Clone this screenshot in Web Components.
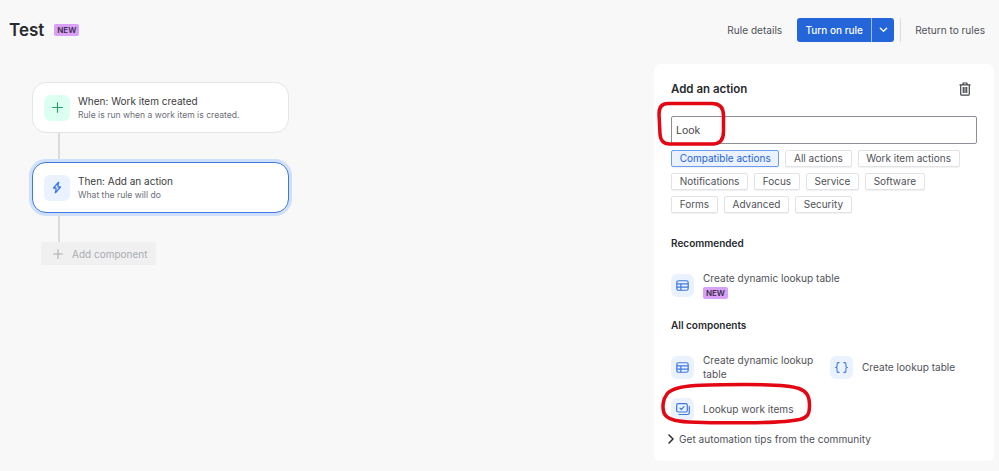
<!DOCTYPE html>
<html lang="en"><head><meta charset="utf-8"><title>Test rule</title>
<style>
html,body{margin:0;height:471px;overflow:hidden;background:#f8f8f8;font-family:Inter,"Noto Sans",sans-serif;color:#292a2e}
</style></head><body>
<rule-app></rule-app>
<script>
const ICON={
plus:s=>`<svg width="${s}" height="${s}" viewBox="0 0 16 16" fill="none" stroke="currentColor" stroke-width="1.4"><path d="M8 1.5v13M1.500 8h13"/></svg>`,
bolt:'<svg width="14" height="15" viewBox="0 0 16 16" fill="none" stroke="currentColor" stroke-width="1.5" stroke-linejoin="round"><path d="M10 1.500 4 8.600h3.200M6 14.500l6-7.100H8.800M10 1.500 8.800 7.400M6 14.500l1.200-5.900"/></svg>',
table:'<svg width="13" height="11" viewBox="0 0 14 12" fill="none" stroke="currentColor" stroke-width="1.300"><rect x=".8" y=".8" width="12.400" height="10.400" rx="2"/><path d="M.8 4.300h12.400M.8 7.700h12.400M5.200 4.300v6.900"/></svg>',
braces:'<svg width="13" height="13" viewBox="0 0 16 14" fill="none" stroke="currentColor" stroke-width="1.300" stroke-linecap="round"><path d="M5 1H3.800C3 1 2.600 1.500 2.600 2.200V5.300C2.600 6 2.200 6.700 1.300 7 2.200 7.300 2.600 8 2.600 8.700v3.100c0 .7.400 1.200 1.200 1.200H5M11 1h1.200c.8 0 1.200.5 1.200 1.200v3.100c0 .7.400 1.400 1.300 1.700-.9.300-1.300 1-1.300 1.700v3.100c0 .7-.4 1.200-1.200 1.200H11"/></svg>',
items:'<svg width="14" height="13" viewBox="0 0 14 13" fill="none" stroke="currentColor" stroke-width="1.200" stroke-linecap="round" stroke-linejoin="round"><rect x=".7" y=".7" width="10.600" height="8.300" rx="1.500"/><path d="M4 5.200 5.300 6.500 8 3.600M13.300 3.500v6.300c0 1-.7 1.700-1.700 1.700H3"/></svg>',
chev:'<svg width="9" height="6" viewBox="0 0 10 6" fill="none" stroke="currentColor" stroke-width="1.500" stroke-linecap="round" stroke-linejoin="round"><path d="M1.500 1 5 4.500 8.500 1"/></svg>',
right:'<svg width="6" height="10" viewBox="0 0 6 10" fill="none" stroke="currentColor" stroke-width="1.500" stroke-linecap="round" stroke-linejoin="round"><path d="M1 1l4 4-4 4"/></svg>',
trash:'<svg width="12" height="14" viewBox="0 0 12 14" fill="none" stroke="currentColor" stroke-width="1.200" stroke-linejoin="round"><path d="M.5 2.800h11M4 2.800V1h4v1.800M1.700 2.800v9.400c0 .6.400 1 1 1h6.600c.6 0 1-.4 1-1V2.800M4.300 5v6M6 5v6M7.700 5v6"/></svg>'
};
function def(name,css,html){
  customElements.define(name,class extends HTMLElement{
    constructor(){super();const s=this.attachShadow({mode:'open'});s.innerHTML='<style>'+css+'</style>'+html;}
  });
}
const F='Inter,sans-serif';
def('new-badge',`:host{display:inline-flex;align-items:center;justify-content:center;width:25px;height:12px;border-radius:2px;background:#d8a0f7;color:#3a2c4a;font:600 8px/12px ${F}}`,'NEW');
def('icon-tile',':host{display:flex;flex:none;align-items:center;justify-content:center;width:var(--size,23px);height:var(--size,23px);border-radius:6px;background:var(--tile,#e9f2fe);color:var(--ink,#3f78e0)}','<slot></slot>');
def('filter-chip',`:host{display:block;height:17px;box-sizing:border-box;padding:0 7.700px;border:1px solid #e2e3e5;border-radius:2px;box-shadow:0 1px 1px #0000000f;background:#fff;color:#505258;font:400 10px/15px ${F};white-space:nowrap}:host([on]){background:#e9f2fe;border-color:#6b9cf0;color:#1f63d6}`,'<slot></slot>');
def('flow-card',`:host{display:flex;align-items:center;gap:8px;box-sizing:border-box;width:257px;height:51px;padding:0 11px;background:#fff;border:1px solid #e4e5e7;border-radius:14px}
:host([active]){border:1.500px solid #3f78e0;box-shadow:0 0 0 3px #cfe0fb}
.t{font:400 10px/14px ${F};color:#3b3c40}.s{font:400 8.600px/13px ${F};color:#6b6e76;margin-top:1px}`,
'<slot name="icon"></slot><div><div class="t"><slot name="title"></slot></div><div class="s"><slot name="sub"></slot></div></div>');
def('flow-line',':host{display:block;width:2px;background:#dcdcde;margin-left:25.500px;height:var(--h,30px)}','');
def('rule-header',`:host{display:flex;align-items:center;height:60px;padding:0 14px 0 9px;box-sizing:border-box}
h1{margin:0;font:600 17px/24px ${F};color:#292a2e}
new-badge{margin-left:10px;margin-top:-1px}
.sp{flex:1}
a{font:400 10.100px/14px ${F};color:#505258}
.btn{display:flex;height:24px;margin-left:15px;border-radius:3px;overflow:hidden;background:#2465d9;color:#fff}
.m{display:flex;align-items:center;justify-content:center;width:74px;font:500 10px/14px ${F};border-right:1px solid #9dbdf1}
.c{display:flex;align-items:center;justify-content:center;width:22px}
.div{width:1px;height:24px;background:#dcdcde;margin:0 14px 0 6px}`,
`<h1>Test</h1><new-badge></new-badge><span class="sp"></span><a>Rule details</a><div class="btn"><span class="m">Turn on rule</span><span class="c">${ICON.chev}</span></div><span class="div"></span><a>Return to rules</a>`);
def('component-item',`:host{display:flex;align-items:center;gap:9px;color:#505258;font:400 10.100px/14px ${F}}
.b{display:flex;flex-direction:column;align-items:flex-start;gap:2px}`,
'<slot name="icon"></slot><div class="b"><slot></slot></div>');
def('action-panel',`:host{display:block;box-sizing:border-box;width:340px;height:397px;padding:16px 17px 0;background:#fff;border-radius:6px;--size:23px}
.top{display:flex;justify-content:space-between;align-items:center;height:18px;padding-right:6px;font:600 11.500px/18px ${F};color:#292a2e}
.top span:last-child{display:flex;color:#44464c}
.inp{margin-top:18px;height:28px;box-sizing:border-box;border:1px solid #8c8f97;border-radius:2px;padding:0 4px;font:400 10.500px/27px ${F};color:#44464c}
.chips{display:flex;flex-direction:column;gap:6px;margin-top:6px}.row{display:flex;gap:6px}
h2{margin:0;font:600 10px/14px ${F};color:#292a2e}
.rec{margin-top:23px}
.l1{margin-top:17px;height:36px}
.all{margin-top:15px}
.grid{display:grid;grid-template-columns:150px auto;column-gap:9px;margin-top:21px;align-items:center}
.w{height:30px;margin-top:13px}
.tips{display:flex;align-items:center;gap:5px;margin:8px 0 0 -3px;font:400 10.100px/14px ${F};color:#505258}
.tips svg{color:#292a2e}
.g2{white-space:nowrap}`,
`<div class="top"><span>Add an action</span><span>${ICON.trash}</span></div>
<div class="inp">Look</div>
<div class="chips">
<div class="row"><filter-chip on>Compatible actions</filter-chip><filter-chip>All actions</filter-chip><filter-chip>Work item actions</filter-chip></div>
<div class="row"><filter-chip>Notifications</filter-chip><filter-chip>Focus</filter-chip><filter-chip>Service</filter-chip><filter-chip>Software</filter-chip></div>
<div class="row"><filter-chip>Forms</filter-chip><filter-chip>Advanced</filter-chip><filter-chip>Security</filter-chip></div>
</div>
<h2 class="rec">Recommended</h2>
<component-item class="l1"><icon-tile slot="icon">${ICON.table}</icon-tile><span>Create dynamic lookup table</span><new-badge></new-badge></component-item>
<h2 class="all">All components</h2>
<div class="grid">
<component-item><icon-tile slot="icon">${ICON.table}</icon-tile><span>Create dynamic lookup table</span></component-item>
<component-item class="g2"><icon-tile slot="icon">${ICON.braces}</icon-tile><span>Create lookup table</span></component-item>
</div>
<component-item class="w"><icon-tile slot="icon">${ICON.items}</icon-tile><span>Lookup work items</span></component-item>
<div class="tips">${ICON.right}<span>Get automation tips from the community</span></div>`);
def('rule-canvas',`:host{display:block;padding:18px 0 0 32px}
.add{display:flex;align-items:center;gap:8px;box-sizing:border-box;width:115px;height:23px;margin-left:9px;padding-left:11px;background:#f0f0f1;border-radius:2px;color:#a9abb0;font:400 10px/14px ${F}}`,
`<flow-card><icon-tile slot="icon" style="--size:26px;--tile:#dcfff1;--ink:#2a9d68">${ICON.plus(13)}</icon-tile><span slot="title">When: Work item created</span><span slot="sub">Rule is run when a work item is created.</span></flow-card>
<flow-line style="--h:29px"></flow-line>
<flow-card active><icon-tile slot="icon" style="--size:26px">${ICON.bolt}</icon-tile><span slot="title">Then: Add an action</span><span slot="sub">What the rule will do</span></flow-card>
<flow-line style="--h:29px"></flow-line>
<div class="add">${ICON.plus(12)}<span>Add component</span></div>`);
def('rule-app',`:host{display:block;position:relative;width:999px;height:471px;overflow:hidden}
main{display:flex;justify-content:space-between;padding:4px 5px 0 0}
.ink{position:absolute;left:0;top:0;pointer-events:none}`,
`<rule-header></rule-header><main><rule-canvas></rule-canvas><action-panel></action-panel></main>
<svg class="ink" width="999" height="471" fill="none" stroke="#e30613" stroke-width="3.500"><path d="M668 103.500h44c8 0 11.500 4 11.500 12v16c0 8-3 12.500-11 12.500h-43c-6 0-9-3-9.500-10l-1-20c0-7 3-10.500 9-10.500z"/><path d="M695 385.500c45-1.500 92-1.500 104 3 9 3.500 10.500 9 10.500 17 0 9-2 12-10 14-20 4.500-85 3.500-111 2.500-12-.5-22-3-24.500-9-2-6-1-14 3-19 4-5 14-7.500 28-8.500z"/></svg>`);
</script>
</body></html>
